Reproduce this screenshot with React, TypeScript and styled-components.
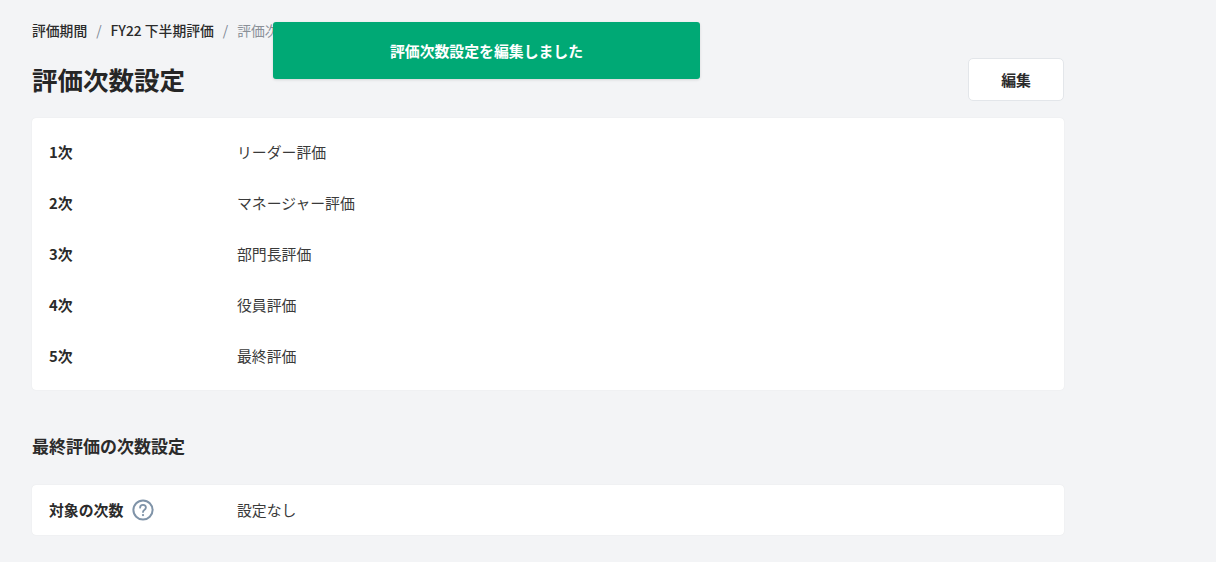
import React from "react";
import styled, { createGlobalStyle } from "styled-components";

const Global = createGlobalStyle`
  html, body { margin: 0; padding: 0; background: #f3f4f6; }
  body { font-family: "Noto Sans CJK JP", "Noto Sans", sans-serif; color: #2b2b2b; }
`;

const Page = styled.div`
  position: relative;
  width: 1216px;
  height: 562px;
  box-sizing: border-box;
  padding: 20px 152px 0 32px;
  overflow: hidden;
`;

const Breadcrumb = styled.nav`
  display: flex;
  align-items: center;
  height: 20px;
  font-size: 13.8px;
  line-height: 20px;
`;

const Crumb = styled.span<{ $current?: boolean }>`
  font-weight: ${(p) => (p.$current ? 400 : 500)};
  color: ${(p) => (p.$current ? "#8a9098" : "#2b2b2b")};
`;

const Sep = styled.span`
  margin: 0 9px;
  color: #7d8794;
  font-weight: 400;
`;

const Header = styled.header`
  display: flex;
  align-items: flex-start;
  justify-content: space-between;
  margin-top: 18px;
  height: 60px;
`;

const Title = styled.h1`
  margin: 4px 0 0;
  font-size: 25.5px;
  line-height: 34px;
  font-weight: 700;
  color: #262626;
`;

const EditButton = styled.button`
  width: 96px;
  height: 43px;
  box-sizing: border-box;
  border: 1px solid #e3e6ea;
  border-radius: 5px;
  padding: 0;
  background: #fff;
  font-family: inherit;
  font-size: 14.875px;
  font-weight: 700;
  color: #2b2b2b;
`;

const Card = styled.section`
  background: #fff;
  border-radius: 4px;
  box-shadow: 0 0 1px rgba(40, 50, 60, 0.12);
  padding: 8px 17px 9px;
`;

const Row = styled.div`
  display: grid;
  grid-template-columns: 188px 1fr;
  align-items: center;
  height: 51px;
  font-size: 14.875px;
`;

const SingleRow = styled(Row)`
  height: 47px;
`;

const Label = styled.div`
  display: flex;
  align-items: center;
  gap: 9px;
  font-weight: 700;
  color: #2b2b2b;
`;

const Value = styled.div`
  font-weight: 400;
  color: #3a3a3a;
`;

const SectionTitle = styled.h2`
  margin: 43px 0 26px;
  font-size: 17px;
  line-height: 26px;
  font-weight: 700;
  color: #2b2b2b;
`;

const SingleCard = styled(Card)`
  padding: 1px 17px 2px;
`;

const IconSlot = styled.span`
  display: flex;
  margin-top: 1px;
`;

const Toast = styled.div`
  position: absolute;
  left: 273px;
  top: 22px;
  width: 427px;
  height: 57px;
  box-sizing: border-box;
  padding-bottom: 1px;
  display: flex;
  align-items: center;
  justify-content: center;
  background: #00a975;
  border-radius: 3px;
  box-shadow: 0 1px 3px rgba(0, 0, 0, 0.12);
  color: #fff;
  font-size: 14.875px;
  font-weight: 700;
`;

const HelpIcon = () => (
  <svg width="22" height="22" viewBox="0 0 22 22" fill="none" aria-hidden="true">
    <circle cx="11" cy="11" r="9.6" stroke="#7f93a8" strokeWidth="2" />
    <path
      d="M8.1 8.7c0-1.7 1.3-2.8 2.9-2.8s2.9 1 2.9 2.6c0 1.2-.7 1.8-1.6 2.4-.9.6-1.3 1.1-1.3 2.2"
      stroke="#7f93a8"
      strokeWidth="1.8"
      strokeLinecap="round"
    />
    <circle cx="11" cy="16.1" r="1.15" fill="#7f93a8" />
  </svg>
);

const rows = [
  ["1次", "リーダー評価"],
  ["2次", "マネージャー評価"],
  ["3次", "部門長評価"],
  ["4次", "役員評価"],
  ["5次", "最終評価"],
];

export default function App() {
  return (
    <Page>
      <Global />
      <Breadcrumb>
        <Crumb>評価期間</Crumb>
        <Sep>/</Sep>
        <Crumb>FY22 下半期評価</Crumb>
        <Sep>/</Sep>
        <Crumb $current>評価次数設定</Crumb>
      </Breadcrumb>
      <Header>
        <Title>評価次数設定</Title>
        <EditButton>編集</EditButton>
      </Header>
      <Card>
        {rows.map(([label, value]) => (
          <Row key={label}>
            <Label>{label}</Label>
            <Value>{value}</Value>
          </Row>
        ))}
      </Card>
      <SectionTitle>最終評価の次数設定</SectionTitle>
      <SingleCard>
        <SingleRow>
          <Label>
            対象の次数
            <IconSlot>
              <HelpIcon />
            </IconSlot>
          </Label>
          <Value>設定なし</Value>
        </SingleRow>
      </SingleCard>
      <Toast>評価次数設定を編集しました</Toast>
    </Page>
  );
}
